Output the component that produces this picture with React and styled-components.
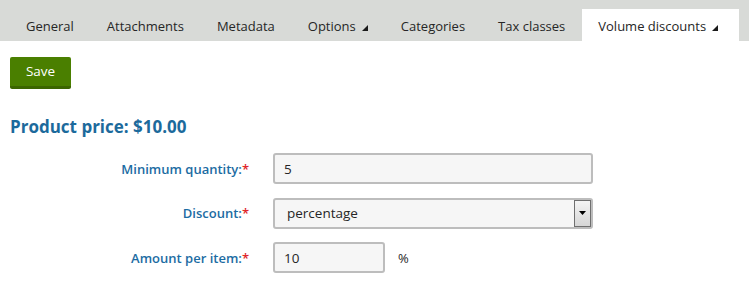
import React from 'react';
import styled, { createGlobalStyle } from 'styled-components';

const tabs = [
  { label: 'General' },
  { label: 'Attachments' },
  { label: 'Metadata' },
  { label: 'Options', menu: true },
  { label: 'Categories' },
  { label: 'Tax classes' },
  { label: 'Volume discounts', menu: true, active: true },
];

const GlobalStyle = createGlobalStyle`
  body {
    margin: 0;
    background: #fff;
    font-family: "Open Sans", "Noto Sans", sans-serif;
  }
`;

const App = () => (
  <>
    <GlobalStyle />
    <TabBar>
      {tabs.map((tab) => (
        <Tab key={tab.label} active={tab.active}>
          {tab.label}
          {tab.menu && (
            <Caret viewBox="0 0 6 6">
              <polygon points="6,0 6,6 0,6" fill="#1a1a1a" />
            </Caret>
          )}
        </Tab>
      ))}
    </TabBar>
    <Content>
      <SaveButton>Save</SaveButton>
      <Heading>Product price: $10.00</Heading>
      <Form>
        <Label>
          Minimum quantity:<Required>*</Required>
        </Label>
        <TextInput defaultValue="5" width={320} />
        <Label>
          Discount:<Required>*</Required>
        </Label>
        <SelectWrap>
          <Select defaultValue="percentage">
            <option value="percentage">percentage</option>
            <option value="fixed">fixed amount</option>
          </Select>
          <SelectArrow>
            <svg width="7" height="4" viewBox="0 0 7 4">
              <polygon points="0,0 7,0 3.5,4" fill="#000" />
            </svg>
          </SelectArrow>
        </SelectWrap>
        <Label>
          Amount per item:<Required>*</Required>
        </Label>
        <Inline>
          <TextInput defaultValue="10" width={112} />
          <Unit>%</Unit>
        </Inline>
      </Form>
    </Content>
  </>
);

const TabBar = styled.div`
  display: flex;
  align-items: flex-end;
  height: 41px;
  padding-left: 10px;
  background: #d8dad7;
`;

const Tab = styled.div`
  display: flex;
  align-items: center;
  height: 32px;
  padding: 2px 21px 0 16px;
  margin-right: -4px;
  font-size: 13px;
  color: #262626;
  background: ${(props) => (props.active ? '#fff' : 'transparent')};
  box-sizing: border-box;
`;

const Caret = styled.svg`
  width: 6px;
  height: 6px;
  margin-left: 6px;
  margin-top: 4px;
`;

const Content = styled.div`
  padding: 16px 10px 0;
`;

const SaveButton = styled.button`
  display: block;
  width: 61px;
  height: 32px;
  padding: 0 0 2px;
  border: none;
  border-bottom: 3px solid #3b6500;
  border-radius: 2px;
  background: #4a7f00;
  color: #fff;
  font-family: "Open Sans", sans-serif;
  font-size: 13.5px;
  font-weight: 500;
`;

const Heading = styled.h2`
  margin: 26px 0 0;
  font-size: 17px;
  font-weight: 700;
  color: #1c6a9c;
  line-height: 24px;
`;

const Form = styled.div`
  display: grid;
  grid-template-columns: 239px auto;
  column-gap: 24px;
  row-gap: 13.5px;
  align-items: center;
  margin-top: 14px;
`;

const Label = styled.label`
  text-align: right;
  font-size: 13px;
  font-weight: 600;
  color: #1c6ca3;
`;

const Required = styled.span`
  color: #e0262a;
`;

const TextInput = styled.input`
  width: ${(props) => props.width}px;
  height: 31px;
  box-sizing: border-box;
  padding: 0 9px;
  border: 2px solid #bdbdbd;
  border-radius: 3px;
  background: #f6f6f6;
  font-family: "Open Sans", sans-serif;
  font-size: 13.5px;
  color: #262626;
  outline: none;
`;

const SelectWrap = styled.div`
  position: relative;
  width: 320px;
  height: 31px;
`;

const Select = styled.select`
  width: 100%;
  height: 100%;
  box-sizing: border-box;
  padding: 0 12px;
  border: 2px solid #bdbdbd;
  border-radius: 3px;
  background: #f6f6f6;
  appearance: none;
  font-family: "Open Sans", sans-serif;
  font-size: 13.5px;
  color: #262626;
  outline: none;
`;

const SelectArrow = styled.div`
  position: absolute;
  top: 2px;
  right: 2px;
  width: 17px;
  height: 27px;
  box-sizing: border-box;
  border: 1px solid #6f6f6f;
  background: linear-gradient(#f4f4f4, #d6d6d6);
  display: flex;
  align-items: center;
  justify-content: center;
  pointer-events: none;
`;

const Inline = styled.div`
  display: flex;
  align-items: center;
  gap: 13px;
`;

const Unit = styled.span`
  font-size: 13px;
  color: #262626;
`;

export default App;
